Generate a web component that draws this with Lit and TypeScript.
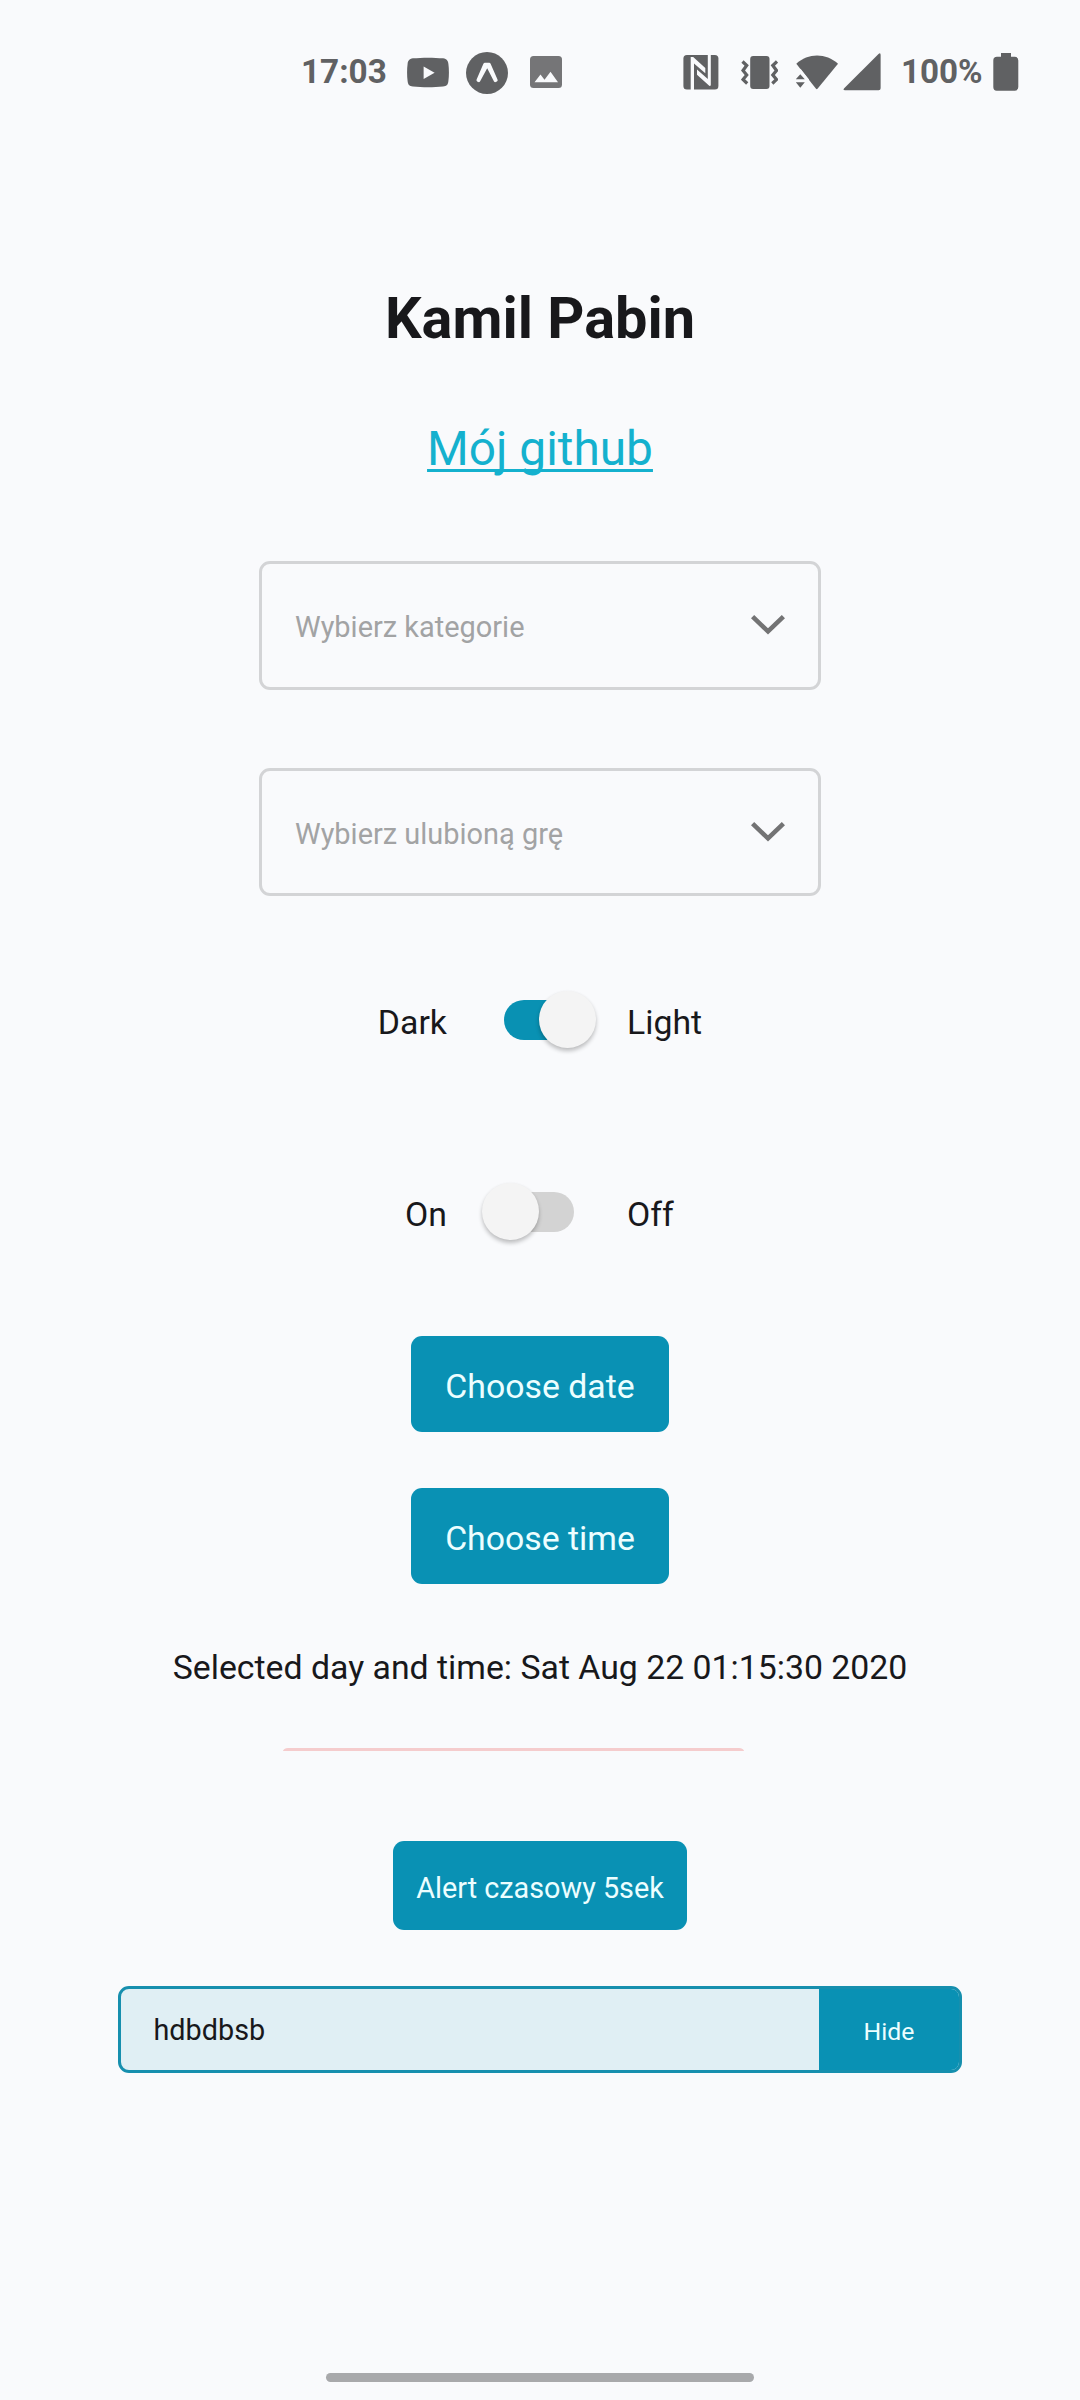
import { LitElement, html, css } from 'lit';
import { customElement, property } from 'lit/decorators.js';

@customElement('status-bar')
export class StatusBar extends LitElement {
  static styles = css`
    :host { display: flex; align-items: flex-start; height: 146px; padding-left: 301px; box-sizing: border-box; color: #606163; }
    svg { display: block; height: 48px; margin-top: 49px; flex: none; fill: currentColor; }
    span { font-weight: 700; line-height: 44px; margin-top: 50px; white-space: nowrap; flex: none; }
    .clock { width: 106px; font-size: 33.3px; }
    .battery { width: 92px; font-size: 33.2px; }
    .gap17 { margin-right: 17px; }
    .gap21 { margin-right: 21px; }
    .gap121 { margin-right: 121px; }
    .gap22 { margin-right: 22px; }
    .gap18 { margin-right: 18px; }
    .gap5 { margin-right: 5px; }
    .cut { fill: #f9fafc; }
    .light { fill: #757577; }
    .line { fill: none; stroke: currentColor; stroke-width: 3.2; }
  `;
  render() {
    return html`
      <span class="clock">17:03</span>
      <svg class="gap17" width="42" viewBox="0 0 42 48">
        <path d="M6 9.3C15 8.4 27 8.4 36 9.3C40 9.8 41 12 41.4 15C42.1 20 42.1 27 41.4 32C41 35.5 40 37 36 37.6C27 38.5 15 38.5 6 37.6C2 37 1 35.5.6 32C-.1 27-.1 20 .6 15C1 12 2 9.8 6 9.3z"></path>
        <path class="cut" d="M16.6 17.500v12.400l11-6.200z"></path>
      </svg>
      <svg class="gap21" width="42" viewBox="0 0 42 48">
        <circle cx="21" cy="24" r="21"></circle>
        <path class="cut" d="M19 13.8h4.200q1 0 1.500 1.200l6.800 15.500q.6 1.400-.6 2l-1.200.6q-1 .4-1.700-.7L21.200 19.200 14 32.400q-.7 1.100-1.700.6l-1.200-.6q-1-.6-.5-1.800l6.700-15.600q.5-1.200 1.700-1.200z"></path>
      </svg>
      <svg class="gap121" width="33" viewBox="-1 0 33 48">
        <rect class="light" y="7" width="32" height="32" rx="3.5"></rect>
        <path class="cut" d="M4.500 33.300l6-7.800 4 5.200 6-8 7.500 10.600z"></path>
      </svg>
      <svg class="gap22" width="36" viewBox="0 0 36 48">
        <rect x=".4" y="6" width="35" height="34.5" rx="3.5"></rect>
        <path class="cut" d="M7.700 8H10.200L22.300 19V24.200L11 14.500V41H7.700zM24.800 5.500H27.800V36.500L26.500 37 14 25.700V20.500L24.800 30z"></path>
      </svg>
      <svg class="gap18" width="37" viewBox="-.5 0 37 48">
        <rect x="8.7" y="7" width="19.300" height="33" rx="3"></rect>
        <path class="line" d="M1 12.500l4.200 4-3.700 5 3.700 4.500-3.700 4.500 4.200 4M35.500 12.500l-4.200 4 3.700 5-3.700 4.500 3.700 4.500-4.200 4"></path>
      </svg>
      <svg class="gap5" width="42" viewBox="0 0 42 48">
        <path d="M.3 14.800C12 3.700 30 3.700 42 14.800L21.500 39.800Q20.800 40.600 20 39.800z"></path>
        <path class="cut" d="M4.500 19.800L13 30.500 10 36-1 31z"></path>
        <path d="M-.2 30.200L4.300 25.200l4.500 5zM-.2 33.300h9L4.300 38.800z"></path>
      </svg>
      <svg width="58" viewBox="0 0 58 48">
        <path d="M2 41.200Q-.5 41.200 1.200 39.300L35.500 5Q37.600 3 37.600 6V39.200Q37.600 41.200 35.600 41.200z"></path>
      </svg>
      <span class="battery">100%</span>
      <svg width="26" viewBox="0 0 26 48">
        <path d="M8 4h10v3.800h4Q25.300 7.800 25.300 11.500V38q0 3.700-3.300 3.700H3.700Q.3 41.700.3 38V11.500Q.3 7.800 4 7.800h4z"></path>
      </svg>`;
  }
}

@customElement('select-box')
export class SelectBox extends LitElement {
  @property() label = '';
  static styles = css`
    :host { display: flex; justify-content: space-between; align-items: center; box-sizing: border-box; width: 562px; height: 129px;
      border: 3px solid #d3d4d6; border-radius: 11px; padding: 0 33.5px 0 33px; font-size: 28.95px; color: #a2a3a4; }
    span { line-height: 40px; padding-top: 3px; }
    svg { width: 34px; height: 20px; margin-bottom: 1px; fill: none; stroke: #737374; stroke-width: 4.6; }
  `;
  render() {
    return html`<span>${this.label}</span>
      <svg viewBox="0 0 34 20"><path d="M1.600 1.700L17 16.400 32.400 1.700"></path></svg>`;
  }
}

@customElement('toggle-row')
export class ToggleRow extends LitElement {
  @property() before = '';
  @property() after = '';
  @property({ type: Boolean, reflect: true }) on = false;
  static styles = css`
    :host { display: grid; grid-template-columns: 447px 57px 70px 1fr; align-items: center; width: 1080px; height: 60px; font-size: 33.8px; }
    .before, .after { line-height: 40px; padding-top: 5px; }
    .before { text-align: right; }
    .after { padding-left: 53px; }
    .track { grid-column: 3; display: flex; align-items: center; height: 40px; border-radius: 20px; background: #d3d3d3; }
    .thumb { flex: none; width: 57px; height: 57px; border-radius: 50%; background: #f4f4f4; margin: -1px 0 0 -22px;
      box-shadow: 0 3px 4px rgba(0,0,0,.24), 0 0 3px rgba(0,0,0,.03); }
    :host([on]) .track { background: #0991b3; }
    :host([on]) .thumb { margin-left: 34.5px; }
  `;
  render() {
    return html`<span class="before">${this.before}</span>
      <div class="track"><div class="thumb"></div></div>
      <span class="after">${this.after}</span>`;
  }
}

@customElement('app-root')
export class AppRoot extends LitElement {
  static styles = css`
    :host { display: block; width: 1080px; height: 2400px; overflow: hidden; background: #f9fafc; color: #18181b;
      font-family: Roboto, sans-serif; font-size: 33.8px; }
    .page { display: flex; flex-direction: column; align-items: center; height: 2254px; }
    h1 { margin: 142px 0 0; font-size: 57.7px; font-weight: 700; line-height: 60px; }
    .link { margin-top: 73px; font-size: 47.8px; line-height: 56px; color: #14b1ce; text-decoration: underline;
      text-decoration-thickness: 2.5px; text-underline-offset: 4px; text-decoration-skip-ink: none; }
    .first { margin-top: 84px; }
    .second { margin-top: 78px; height: 128px; }
    .theme { margin-top: 94px; }
    .power { margin-top: 132px; }
    button { display: block; box-sizing: border-box; border: 0; border-radius: 11px; background: #0991b4; color: #ecfeff;
      font: inherit; padding: 5px 0 0; width: 258px; height: 96px; line-height: 91px; text-align: center; flex: none; }
    .date { margin-top: 94px; }
    .time { margin-top: 56px; }
    .selected { margin: 64px 0 0; line-height: 40px; white-space: nowrap; }
    .rule { width: 461px; height: 3px; margin: 60px 53px 0 0; border-radius: 5px 5px 0 0 / 3px 3px 0 0; background: #f5cccd; }
    .alert { margin-top: 90px; width: 294px; height: 89px; line-height: 83px; padding-top: 6px; font-size: 28.8px; }
    .field { display: flex; box-sizing: border-box; width: 844px; height: 87px; margin-top: 56px; overflow: hidden;
      border: 3px solid #168fae; border-radius: 11px; background: #e0eff4; }
    .value { flex: 1; padding-left: 32.5px; line-height: 82px; font-size: 28.8px; }
    .hide { width: 140px; height: 81px; line-height: 77px; padding-top: 4px; border-radius: 0; font-size: 24.8px; }
    .home { width: 428px; height: 9px; margin-top: auto; margin-bottom: 18px; border-radius: 5px; background: #a8a9ab; }
  `;
  render() {
    return html`
      <status-bar></status-bar>
      <main class="page">
        <h1>Kamil Pabin</h1>
        <a class="link">Mój github</a>
        <select-box class="first" label="Wybierz kategorie"></select-box>
        <select-box class="second" label="Wybierz ulubioną grę"></select-box>
        <toggle-row class="theme" before="Dark" after="Light" on></toggle-row>
        <toggle-row class="power" before="On" after="Off"></toggle-row>
        <button class="date">Choose date</button>
        <button class="time">Choose time</button>
        <p class="selected">Selected day and time: Sat Aug 22 01:15:30 2020</p>
        <div class="rule"></div>
        <button class="alert">Alert czasowy 5sek</button>
        <div class="field"><span class="value">hdbdbsb</span><button class="hide">Hide</button></div>
        <div class="home"></div>
      </main>`;
  }
}
